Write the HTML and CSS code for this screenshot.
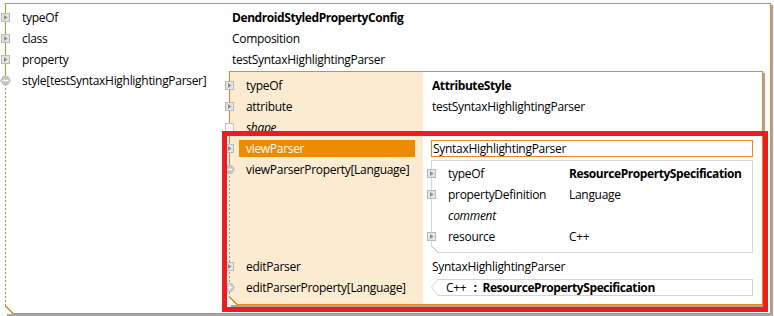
FILE: index.html
```html
<!DOCTYPE html>
<html>
<head>
<meta charset="utf-8">
<link rel="stylesheet" href="styles.css">
</head>
<body>
<div class="panel outer">
  <div class="row">
    <div class="lab"><span class="slot"><svg width="9" height="9" viewBox="0 0 9 9"><rect x="0.5" y="0.5" width="8" height="8" fill="#e4e4e4" stroke="#b9b9b9"/><path d="M3 2 L6.5 4.5 L3 7 Z" fill="#8e8e8e"/></svg></span><span class="name">typeOf</span></div>
    <div class="val"><div class="txt b">DendroidStyledPropertyConfig</div></div>
  </div>
  <div class="row">
    <div class="lab"><span class="slot"><svg width="9" height="9" viewBox="0 0 9 9"><rect x="0.5" y="0.5" width="8" height="8" fill="#e4e4e4" stroke="#b9b9b9"/><path d="M3 2 L6.5 4.5 L3 7 Z" fill="#8e8e8e"/></svg></span><span class="name">class</span></div>
    <div class="val"><div class="txt">Composition</div></div>
  </div>
  <div class="row">
    <div class="lab"><span class="slot"><svg width="9" height="9" viewBox="0 0 9 9"><rect x="0.5" y="0.5" width="8" height="8" fill="#e4e4e4" stroke="#b9b9b9"/><path d="M3 2 L6.5 4.5 L3 7 Z" fill="#8e8e8e"/></svg></span><span class="name">property</span></div>
    <div class="val"><div class="txt">testSyntaxHighlightingParser</div></div>
  </div>
  <div class="row">
    <div class="lab"><span class="slot"><svg width="11" height="9" viewBox="0 0 11 9"><path d="M3 0 H8 L11 4.5 L8 9 H3 L0 4.5 Z" fill="#c2c2c2"/><path d="M2.5 4.5 H8.5" stroke="#fff" stroke-width="1.6"/></svg></span><span class="name">style[testSyntaxHighlightingParser]</span></div>
    <div class="val">
      <div class="panel inner">
        <div class="row">
          <div class="lab"><span class="slot"><svg width="9" height="9" viewBox="0 0 9 9"><rect x="0.5" y="0.5" width="8" height="8" fill="#e4e4e4" stroke="#b9b9b9"/><path d="M3 2 L6.5 4.5 L3 7 Z" fill="#8e8e8e"/></svg></span><span class="name">typeOf</span></div>
          <div class="val"><div class="txt b">AttributeStyle</div></div>
        </div>
        <div class="row">
          <div class="lab"><span class="slot"><svg width="9" height="9" viewBox="0 0 9 9"><rect x="0.5" y="0.5" width="8" height="8" fill="#e4e4e4" stroke="#b9b9b9"/><path d="M3 2 L6.5 4.5 L3 7 Z" fill="#8e8e8e"/></svg></span><span class="name">attribute</span></div>
          <div class="val"><div class="txt">testSyntaxHighlightingParser</div></div>
        </div>
        <div class="row">
          <div class="lab"><span class="slot"><svg width="9" height="9" viewBox="0 0 9 9"><rect x="0.5" y="0.5" width="8" height="8" fill="#f6f6f6" stroke="#c4c4c4"/></svg></span><span class="name i">shape</span></div>
          <div class="val"></div>
        </div>
        <div class="row">
          <div class="lab"><span class="slot"><svg width="9" height="9" viewBox="0 0 9 9"><rect x="0.5" y="0.5" width="8" height="8" fill="#e4e4e4" stroke="#b9b9b9"/><path d="M3 2 L6.5 4.5 L3 7 Z" fill="#8e8e8e"/></svg></span><span class="name sel">viewParser</span></div>
          <div class="val"><div class="box">SyntaxHighlightingParser</div></div>
        </div>
        <div class="row">
          <div class="lab"><span class="slot"><svg width="11" height="9" viewBox="0 0 11 9"><path d="M3 0 H8 L11 4.5 L8 9 H3 L0 4.5 Z" fill="#c2c2c2"/><path d="M2.5 4.5 H8.5" stroke="#fff" stroke-width="1.6"/></svg></span><span class="name">viewParserProperty[Language]</span></div>
          <div class="val">
            <div class="panel nested">
              <div class="row">
                <div class="lab"><span class="slot"><svg width="9" height="9" viewBox="0 0 9 9"><rect x="0.5" y="0.5" width="8" height="8" fill="#e4e4e4" stroke="#b9b9b9"/><path d="M3 2 L6.5 4.5 L3 7 Z" fill="#8e8e8e"/></svg></span><span class="name">typeOf</span></div>
                <div class="val"><div class="txt b">ResourcePropertySpecification</div></div>
              </div>
              <div class="row">
                <div class="lab"><span class="slot"><svg width="9" height="9" viewBox="0 0 9 9"><rect x="0.5" y="0.5" width="8" height="8" fill="#e4e4e4" stroke="#b9b9b9"/><path d="M3 2 L6.5 4.5 L3 7 Z" fill="#8e8e8e"/></svg></span><span class="name">propertyDefinition</span></div>
                <div class="val"><div class="txt">Language</div></div>
              </div>
              <div class="row">
                <div class="lab"><span class="slot"></span><span class="name i">comment</span></div>
                <div class="val"></div>
              </div>
              <div class="row">
                <div class="lab"><span class="slot"><svg width="9" height="9" viewBox="0 0 9 9"><rect x="0.5" y="0.5" width="8" height="8" fill="#e4e4e4" stroke="#b9b9b9"/><path d="M3 2 L6.5 4.5 L3 7 Z" fill="#8e8e8e"/></svg></span><span class="name">resource</span></div>
                <div class="val"><div class="txt">C++</div></div>
              </div>
            </div>
          </div>
        </div>
        <div class="row">
          <div class="lab"><span class="slot"><svg width="9" height="9" viewBox="0 0 9 9"><rect x="0.5" y="0.5" width="8" height="8" fill="#e4e4e4" stroke="#b9b9b9"/><path d="M3 2 L6.5 4.5 L3 7 Z" fill="#8e8e8e"/></svg></span><span class="name">editParser</span></div>
          <div class="val"><div class="txt">SyntaxHighlightingParser</div></div>
        </div>
        <div class="row">
          <div class="lab"><span class="slot"><svg width="11" height="9" viewBox="0 0 11 9"><path d="M3 0 H8 L11 4.5 L8 9 H3 L0 4.5 Z" fill="#c2c2c2"/><path d="M2.5 4.5 H8.5 M5.5 1.5 V7.5" stroke="#fff" stroke-width="1.6"/></svg></span><span class="name">editParserProperty[Language]</span></div>
          <div class="val"><div class="chev"><div class="chev-in"><span>C++</span><b class="sep">:</b><b>ResourcePropertySpecification</b></div></div></div>
        </div>
      </div>
    </div>
  </div>
</div>
<div class="annot"></div>
</body>
</html>
```

FILE: styles.css
```css
html, body {
  margin: 0;
  padding: 0;
  background: #fff;
}
body {
  font-family: "Open Sans", "Noto Sans", sans-serif;
  font-size: 12px;
  letter-spacing: -0.3px;
  color: #000;
  width: 774px;
  height: 316px;
  overflow: hidden;
  position: relative;
}
.panel {
  position: relative;
  box-sizing: border-box;
}
.outer {
  margin: 3px 0 0 5px;
  width: 766px;
  border: 1px solid #e3891e;
  border-left: none;
  padding: 3px 0 8px 1px;
  background:
    linear-gradient(#e3891e, #e3891e) 0 0 / 1px 73px no-repeat,
    repeating-linear-gradient(to bottom, #e3891e 0 2px, transparent 2px 4px) 0 0 / 1px 100% no-repeat,
    #fff;
  box-shadow: 2px 2px 1px rgba(0, 0, 0, 0.35);
}
.outer::after,
.inner::after {
  content: "";
  position: absolute;
  left: 0;
  bottom: -1px;
  width: 9px;
  height: 9px;
  background: linear-gradient(to top right, #fff calc(50% - 0.8px), #e3891e calc(50% - 0.8px) calc(50% + 0.6px), transparent calc(50% + 0.6px));
}
.row {
  display: flex;
}
.lab {
  flex: none;
  height: 21px;
  display: flex;
  align-items: center;
}
.slot {
  flex: none;
  width: 11px;
  height: 21px;
  margin-left: -6px;
  margin-right: 4px;
  display: flex;
  align-items: center;
  justify-content: center;
}
.slot svg {
  display: block;
}
.name {
  padding-left: 7px;
  white-space: nowrap;
}
.val {
  flex: 1;
  min-width: 0;
}
.txt {
  height: 21px;
  display: flex;
  align-items: center;
  white-space: nowrap;
}
.b {
  font-weight: bold;
  letter-spacing: -0.42px;
}
.i {
  font-style: italic;
}
.outer > .row > .lab {
  width: 223px;
}
.outer > .row > .val {
  padding-right: 7px;
}
.outer > .row > .val > .txt {
  padding-left: 3px;
}
.inner {
  margin-top: 1px;
  border: 1px solid #e3891e;
  border-left: none;
  padding: 3px 0 6px 1px;
  background:
    linear-gradient(#e3891e, #e3891e) 0 0 / 1px 96px no-repeat,
    repeating-linear-gradient(to bottom, #e3891e 0 2px, transparent 2px 4px) 0 0 / 1px 100% no-repeat,
    linear-gradient(to right, #fbebd0 194px, #fff 194px);
  box-shadow: 2px 2px 1px rgba(0, 0, 0, 0.35);
}
.inner > .row > .lab {
  width: 193px;
}
.inner > .row > .val {
  padding: 0 9px 0 8px;
}
.inner > .row > .val > .txt {
  padding-left: 1px;
}
.sel {
  flex: 1;
  height: 17px;
  display: flex;
  align-items: center;
  margin-right: 8px;
  background: #ee8a00;
  color: #fff;
}
.box {
  box-sizing: border-box;
  height: 17px;
  margin-top: 2px;
  border: 1px solid #e3891e;
  padding-left: 1px;
  display: flex;
  align-items: center;
  white-space: nowrap;
}
.nested {
  margin: 1px 0 3px;
  border: 1px solid #d6d6d6;
  padding: 2px 0 5px;
  background: #fff;
}
.nested::after {
  content: "";
  position: absolute;
  left: -1px;
  bottom: -1px;
  width: 8px;
  height: 8px;
  background: linear-gradient(to top right, #fff calc(50% - 0.8px), #d6d6d6 calc(50% - 0.8px) calc(50% + 0.6px), transparent calc(50% + 0.6px));
}
.nested > .row > .lab {
  width: 137px;
}
.chev {
  height: 17px;
  margin-top: 2px;
  padding: 1px;
  box-sizing: border-box;
  background: #d3d3d3;
  clip-path: polygon(7px 0, 100% 0, 100% 100%, 7px 100%, 0 50%);
}
.chev-in {
  height: 15px;
  background: #fff;
  clip-path: polygon(6.2px 0, 100% 0, 100% 100%, 6.2px 100%, 0 50%);
  display: flex;
  align-items: center;
  padding-left: 14px;
  white-space: nowrap;
}
.chev-in b {
  letter-spacing: -0.42px;
}
.chev-in .sep {
  margin: 0 6px 0 7px;
}
.annot {
  position: absolute;
  left: 222px;
  top: 131px;
  width: 546px;
  height: 181px;
  box-sizing: border-box;
  border: 5px solid #ed1c24;
}
```
